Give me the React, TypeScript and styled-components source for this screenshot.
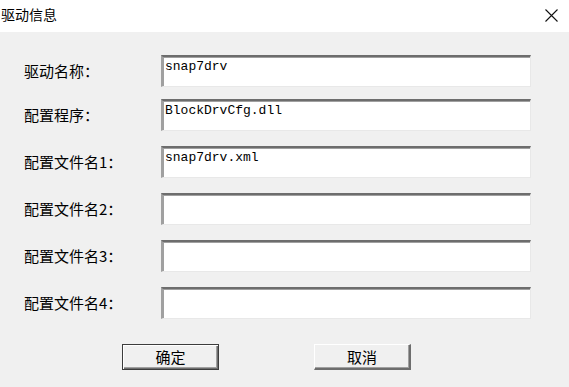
import React from 'react';
import styled, { createGlobalStyle } from 'styled-components';

const GlobalStyle = createGlobalStyle`
  html, body {
    margin: 0;
    padding: 0;
    background: #f0f0f0;
  }
  body {
    font-family: 'Noto Sans CJK SC', 'Noto Sans', sans-serif;
  }
`;

const Dialog = styled.div`
  width: 569px;
  height: 387px;
  background: #f0f0f0;
  display: flex;
  flex-direction: column;
  overflow: hidden;
`;

const TitleBar = styled.div`
  height: 32px;
  background: #ffffff;
  display: flex;
  align-items: center;
  justify-content: space-between;
  padding: 0 10px 0 1px;
  box-sizing: border-box;
`;

const Title = styled.span`
  font-size: 14px;
  color: #000;
  margin-top: -4px;
`;

const CloseButton = styled.div`
  width: 16px;
  height: 16px;
  display: flex;
  align-items: center;
  justify-content: center;
  margin-top: -2px;
`;

const Form = styled.div`
  display: flex;
  flex-direction: column;
  padding: 23px 0 0 24px;
`;

const Row = styled.div<{ $top: number }>`
  display: grid;
  grid-template-columns: 137px 370px;
  align-items: center;
  margin-top: ${(p) => p.$top}px;
`;

const Label = styled.label`
  font-size: 15px;
  color: #000;
  white-space: nowrap;
  margin-top: -1px;
`;

const Field = styled.div`
  height: 32px;
  box-sizing: border-box;
  background: #fff;
  border-style: solid;
  border-width: 2px 1px 1px 2px;
  border-color: #6d6d6d #e8e8e8 #e8e8e8 #a0a0a0;
  box-shadow: inset 1px 1px 0 #a0a0a0;
  padding: 2px 0 0 2px;
  font-family: 'Liberation Mono', monospace;
  font-size: 13px;
  line-height: 16px;
  color: #000;
`;

const Buttons = styled.div`
  display: flex;
  padding: 25px 0 0 122px;
  gap: 95px;
`;

const Button = styled.button<{ $default?: boolean }>`
  width: 97px;
  height: 26px;
  box-sizing: border-box;
  background: #f0f0f0;
  font-family: 'Noto Sans CJK SC', sans-serif;
  font-size: 15px;
  color: #000;
  padding: 0;
  border-style: solid;
  border-width: ${(p) => (p.$default ? '1px' : '1px 2px 2px 1px')};
  border-color: ${(p) =>
    p.$default ? '#3c3c3c' : '#ffffff #6d6d6d #6d6d6d #ffffff'};
  box-shadow: ${(p) =>
    p.$default
      ? 'inset 1px 1px 0 #ffffff, inset -1px -1px 0 #6d6d6d, inset -2px -2px 0 #a0a0a0'
      : 'inset -1px -1px 0 #a0a0a0'};
  line-height: 20px;
`;

const rows = [
  { label: '驱动名称：', value: 'snap7drv', top: 0 },
  { label: '配置程序：', value: 'BlockDrvCfg.dll', top: 12 },
  { label: '配置文件名1：', value: 'snap7drv.xml', top: 15 },
  { label: '配置文件名2：', value: '', top: 15 },
  { label: '配置文件名3：', value: '', top: 15 },
  { label: '配置文件名4：', value: '', top: 15 },
];

const App: React.FC = () => {
  return (
    <>
      <GlobalStyle />
      <Dialog>
        <TitleBar>
          <Title>驱动信息</Title>
          <CloseButton>
            <svg width="13" height="13" viewBox="0 0 13 13">
              <path d="M0.5 0.5 L12.5 12.5 M12.5 0.5 L0.5 12.5" stroke="#111" strokeWidth="1.1" fill="none" />
            </svg>
          </CloseButton>
        </TitleBar>
        <Form>
          {rows.map((r) => (
            <Row key={r.label} $top={r.top}>
              <Label>{r.label}</Label>
              <Field>{r.value}</Field>
            </Row>
          ))}
        </Form>
        <Buttons>
          <Button $default>确定</Button>
          <Button>取消</Button>
        </Buttons>
      </Dialog>
    </>
  );
};

export default App;
